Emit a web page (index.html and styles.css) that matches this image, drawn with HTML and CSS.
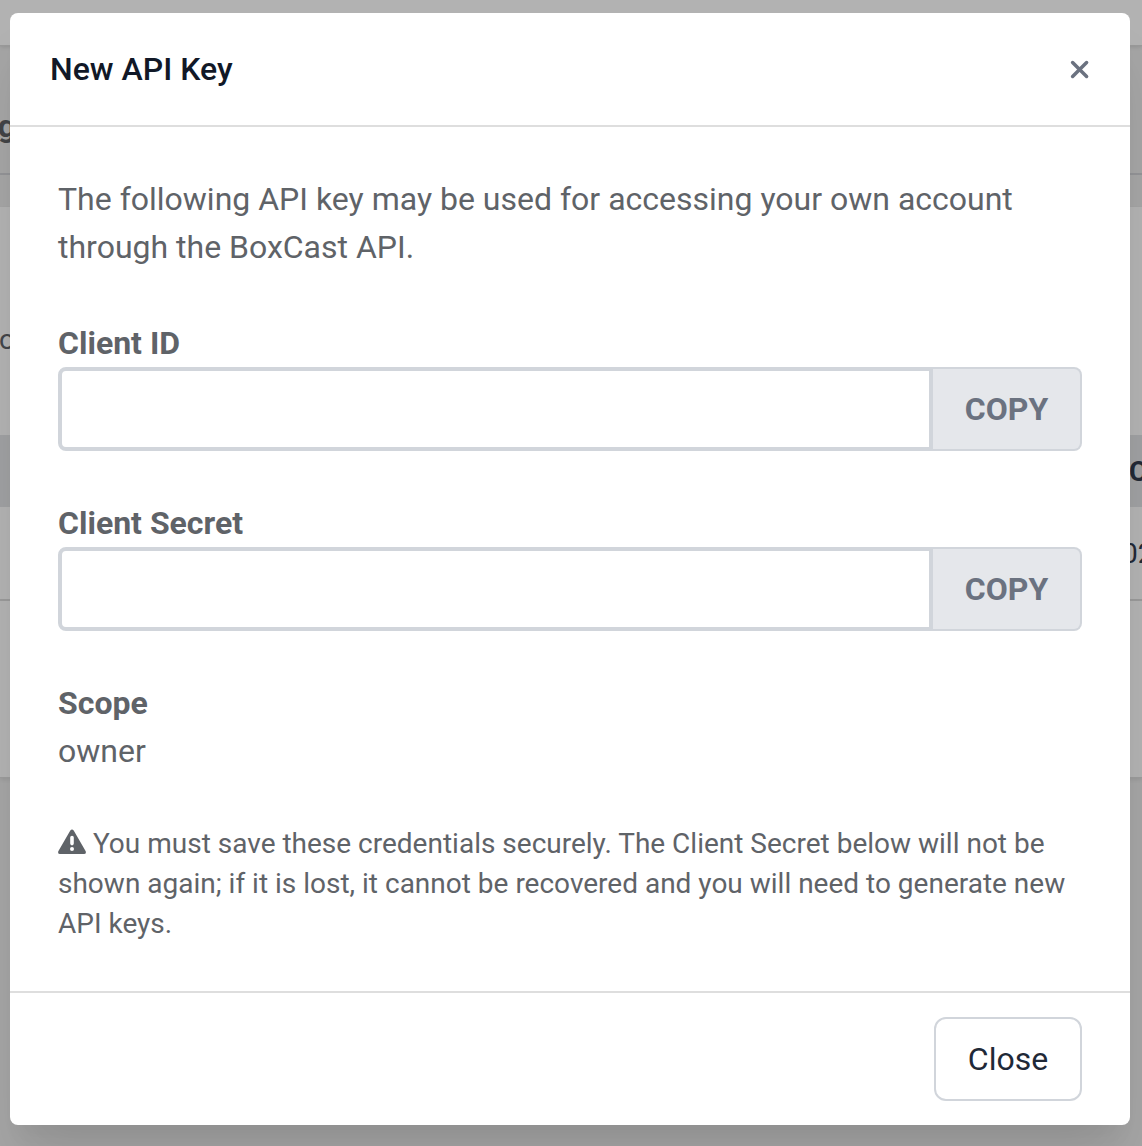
FILE: index.html
```html
<!DOCTYPE html>
<html lang="en">
<head>
<meta charset="utf-8">
<title>New API Key</title>
<link rel="stylesheet" href="styles.css">
</head>
<body>
<div class="page" aria-hidden="true">
  <div class="page-top"></div>
  <div class="page-heading"><span class="clip-left heading-text">g</span></div>
  <div class="page-gap"></div>
  <div class="panel">
    <div class="panel-intro"><span class="intro-text">o</span></div>
    <div class="table-head"><span class="head-text">C</span></div>
    <div class="table-row"><span class="row-text">02</span></div>
    <div class="panel-rest"></div>
  </div>
</div>
<div class="overlay">
  <section class="modal" role="dialog" aria-labelledby="title">
    <header class="modal-header">
      <h1 class="title" id="title">New API Key</h1>
      <button class="dismiss" aria-label="Dismiss">
        <svg width="20" height="20" viewBox="0 0 20 20"><path d="M2.6 3.5l14 14M16.6 3.5l-14 14"/></svg>
      </button>
    </header>
    <div class="modal-body">
      <p class="intro">The following API key may be used for accessing your own account through the BoxCast API.</p>
      <div class="field">
        <label class="label" for="client-id">Client ID</label>
        <div class="input-group"><input class="input" id="client-id" type="text" readonly><button class="copy">COPY</button></div>
      </div>
      <div class="field">
        <label class="label" for="client-secret">Client Secret</label>
        <div class="input-group"><input class="input" id="client-secret" type="text" readonly><button class="copy">COPY</button></div>
      </div>
      <div class="field">
        <div class="label">Scope</div>
        <div>owner</div>
      </div>
      <p class="warning"><svg class="warning-icon" width="28" height="28" viewBox="0 0 28 28"><path fill-rule="evenodd" d="M12.3 1.4Q14 -.6 15.7 1.4L27.7 22.2Q28.5 25 26 25H2Q-.5 25 .3 22.2ZM12.2 8.6V14.6a1.8 1.8 0 0 0 3.6 0V8.6a1.8 1.8 0 0 0-3.6 0ZM14 17.9a2 2 0 1 0 0 4 2 2 0 0 0 0-4Z"/></svg> You must save these credentials securely. The Client Secret below will not be shown again; if it is lost, it cannot be recovered and you will need to generate new API keys.</p>
    </div>
    <footer class="modal-footer"><button class="close">Close</button></footer>
  </section>
</div>
</body>
</html>
```
FILE: styles.css
```css
* { box-sizing: border-box; }
body {
  margin: 0;
  height: 1146px;
  overflow: hidden;
  background: #a5a5a5;
  color: #5f6368;
  font: 400 32px/48px Roboto, sans-serif;
}
h1, p { margin: 0; }
button, input { margin: 0; font: inherit; }

.page { height: 1146px; overflow: hidden; }
.page-top { height: 46px; background: #b2b2b2; border-bottom: 1px solid #999; box-shadow: 0 1px 4px rgba(0, 0, 0, .12); }
.page-heading { display: flex; height: 129px; padding-top: 56px; border-bottom: 2px solid #929396; color: #424346; font-weight: 700; }
.page-gap { height: 32px; }
.panel { height: 571px; background: #b2b2b2; border-bottom: 1px solid #9b9b9b; box-shadow: 0 2px 4px rgba(0, 0, 0, .08); }
.panel-intro { display: flex; height: 228px; padding-top: 109px; color: #424549; font-size: 28px; }
.table-head { display: flex; justify-content: flex-end; height: 72px; padding-top: 13px; background: #9fa0a2; color: #222936; font-size: 28px; font-weight: 700; }
.table-row { display: flex; justify-content: flex-end; height: 94px; padding-top: 23px; border-bottom: 2px solid #999; color: #222936; font-size: 28px; }
.clip-left { display: flex; justify-content: flex-end; white-space: nowrap; }
.heading-text { width: 16px; }
.intro-text { margin-left: -1px; }
.head-text { width: 13px; }
.row-text { width: 20px; }

.overlay { position: absolute; inset: 0; padding: 13px 12px 21px 10px; display: flex; }
.modal {
  flex: 1;
  display: flex;
  flex-direction: column;
  border-radius: 8px;
  background: #fff;
  box-shadow: 0 40px 50px -10px rgba(0, 0, 0, .1), 0 20px 20px -10px rgba(0, 0, 0, .04);
}
.modal-header { display: flex; align-items: center; justify-content: space-between; height: 114px; padding: 0 40px; border-bottom: 2px solid #dedede; }
.title { color: #111827; font-size: 32px; line-height: 48px; font-weight: 500; }
.dismiss { display: flex; padding: 0; border: 0; background: none; }
.dismiss svg { fill: none; stroke: #6b7280; stroke-width: 3.5; stroke-linecap: round; }
.modal-body { flex: 1; display: flex; flex-direction: column; gap: 48px; padding: 48px 48px 47px; }
.label { display: block; font-weight: 700; }
.input-group { display: flex; height: 84px; }
.input { flex: 1; min-width: 0; border: 4px solid #d1d5db; border-radius: 8px 0 0 8px; background: #fff; outline: 0; }
.copy { width: 149px; padding: 0; border: 2px solid #d1d5db; border-left: 0; border-radius: 0 8px 8px 0; background: #e5e7eb; color: #6b7280; font-weight: 700; }
.warning { padding-top: 1px; font-size: 28px; line-height: 40px; }
.warning-icon { fill: currentColor; vertical-align: -4px; }
.modal-footer { display: flex; flex: none; justify-content: flex-end; align-items: center; height: 134px; padding: 0 48px; border-top: 2px solid #dedede; }
.close { width: 148px; height: 84px; padding: 0; border: 2px solid #d1d5db; border-radius: 12px; background: #fff; color: #1f2937; }
```
